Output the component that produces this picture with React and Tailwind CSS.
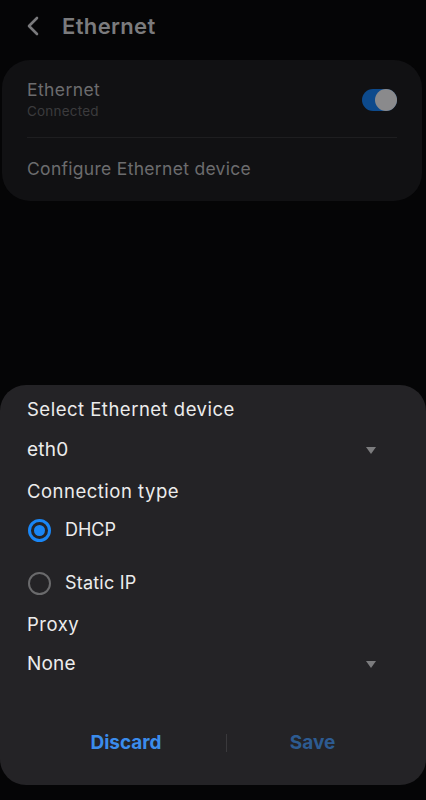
import React from "react";

function Radio({ checked }) {
  return checked ? (
    <div className="w-[23px] h-[23px] rounded-full border-[3px] border-[#1a86f5] flex items-center justify-center">
      <div className="w-[11px] h-[11px] rounded-full bg-[#1a86f5]" />
    </div>
  ) : (
    <div className="w-[23px] h-[23px] rounded-full border-2 border-[#6a6a6c]" />
  );
}

function Caret() {
  return (
    <svg width="10" height="7" viewBox="0 0 10 7">
      <path d="M0 0 L10 0 L5 7 Z" fill="#7c7c7e" />
    </svg>
  );
}

export default function App() {
  return (
    <div
      className="w-[426px] h-[800px] bg-[#050506] flex flex-col overflow-hidden"
      style={{ fontFamily: "Inter, Roboto, 'Noto Sans', sans-serif" }}
    >
      <div className="h-[52px] flex items-center pl-[26px] gap-[20px]">
        <svg width="16" height="20" viewBox="0 0 16 20">
          <path d="M11 2 L3 10 L11 18" stroke="#7a7a7c" strokeWidth="2.6" fill="none" strokeLinecap="round" strokeLinejoin="round" />
        </svg>
        <span className="text-[22px] leading-[28px] font-semibold tracking-[0.35px] text-[#7b7b7d]">Ethernet</span>
      </div>

      <div className="mt-[8px] mx-[2px] mr-[4px] rounded-[28px] bg-[#111113] px-[25px]">
        <div className="flex items-center justify-between h-[77px] pt-[2px]">
          <div className="flex flex-col">
            <span className="text-[17.5px] leading-[22px] tracking-[0.4px] text-[#6c6c6e]">Ethernet</span>
            <span className="text-[13.5px] leading-[19px] mt-[1px] tracking-[0.2px] text-[#3b3b3d]">Connected</span>
          </div>
          <div className="w-[35px] h-[22px] rounded-full bg-[#0d4a8c] relative">
            <div className="absolute right-0 top-0 w-[22px] h-[22px] rounded-full bg-[#8a8a8c]" />
          </div>
        </div>
        <div className="h-px bg-[#1e1e20]" />
        <div className="h-[63px] flex items-center">
          <span className="text-[17.5px] tracking-[0.3px] text-[#6c6c6e]">Configure Ethernet device</span>
        </div>
      </div>

      <div className="mt-[184px] h-[400px] rounded-[26px] bg-[#242326] px-[27px] pt-[12px] flex flex-col">
        <div className="text-[18.5px] leading-[24px] tracking-[0.5px] text-[#ececec]">Select Ethernet device</div>
        <div className="mt-[17px] h-[24px] flex items-center justify-between pr-[23px]">
          <span className="text-[19px] leading-[24px] tracking-[0.2px] text-[#ececec]">eth0</span>
          <Caret />
        </div>
        <div className="mt-[17px] text-[18.5px] leading-[24px] tracking-[0.5px] text-[#ececec]">Connection type</div>
        <div className="mt-[15px] h-[24px] flex items-center gap-[14px] ml-[1px]">
          <Radio checked />
          <span className="text-[18px] leading-[24px] text-[#ececec]">DHCP</span>
        </div>
        <div className="mt-[29px] h-[24px] flex items-center gap-[14px] ml-[1px]">
          <Radio />
          <span className="text-[18px] leading-[24px] tracking-[0.2px] text-[#ececec]">Static IP</span>
        </div>
        <div className="mt-[17px] text-[18.5px] leading-[24px] tracking-[0.5px] text-[#ececec]">Proxy</div>
        <div className="mt-[16px] h-[24px] flex items-center justify-between pr-[23px]">
          <span className="text-[19px] leading-[24px] tracking-[0.2px] text-[#ececec]">None</span>
          <Caret />
        </div>
        <div className="mt-[55px] h-[24px] flex items-center mx-[-27px]">
          <div className="w-[226px] flex justify-center pl-[26px]">
            <span className="text-[19px] leading-[24px] font-bold text-[#3b8cec]">Discard</span>
          </div>
          <div className="w-px h-[18px] bg-[#3a393c]" />
          <div className="flex-1 flex justify-center pr-[28px]">
            <span className="text-[19px] leading-[24px] font-bold text-[#2d5b91]">Save</span>
          </div>
        </div>
      </div>
    </div>
  );
}
